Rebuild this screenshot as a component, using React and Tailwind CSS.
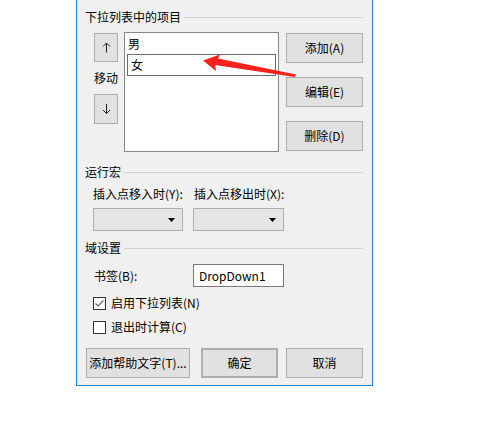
import React from "react";

const font = { fontFamily: '"Noto Sans CJK SC", "Noto Sans", sans-serif' };

function Header({ children }) {
  return (
    <div className="flex items-center h-[16px] leading-[16px]">
      <span className="whitespace-nowrap">{children}</span>
      <div className="flex-1 h-px bg-[#d2d2d2] ml-[3px] mr-[1px]" />
    </div>
  );
}

function Btn({ children, className = "" }) {
  return (
    <div
      className={
        "h-[30px] flex items-center justify-center bg-[#e1e1e1] border border-[#adadad] leading-[16px] whitespace-nowrap " +
        className
      }
    >
      {children}
    </div>
  );
}

function Combo({ w }) {
  return (
    <div
      className={
        "h-[23px] bg-[#e5e5e5] border border-[#acacac] flex items-center justify-end pr-[7px] " + w
      }
    >
      <svg width="7" height="4" viewBox="0 0 7 4">
        <path d="M0 0 H7 L3.5 4 Z" fill="#000" />
      </svg>
    </div>
  );
}

function Check({ checked }) {
  return (
    <div className="w-[13px] h-[13px] border border-[#333] bg-white flex items-center justify-center">
      {checked && (
        <svg width="11" height="11" viewBox="0 0 11 11">
          <path d="M1.5 5.5 L4 8 L9.5 2.5" stroke="#6a6a6a" strokeWidth="1.2" fill="none" />
        </svg>
      )}
    </div>
  );
}

function Arrow({ up }) {
  return (
    <svg width="9" height="11" viewBox="0 0 9 11">
      {up ? (
        <path d="M4.5 1 V10.5 M1 4.5 L4.5 1 L8 4.5" stroke="#222" strokeWidth="1" fill="none" />
      ) : (
        <path d="M4.5 0 V9.5 M1 6 L4.5 9.5 L8 6" stroke="#222" strokeWidth="1" fill="none" />
      )}
    </svg>
  );
}

export default function App() {
  return (
    <div className="w-[502px] h-[421px] bg-white relative text-[12px] text-black" style={font}>
      <div className="ml-[76px] w-[297px] h-[386px] bg-[#f0f0f0] border-x border-b border-[#1883d7] px-[8px] pt-[9px]">
        <Header>下拉列表中的项目</Header>

        <div className="flex mt-[7px] h-[120px]">
          <div className="ml-[8px] w-[26px] flex flex-col items-center">
            <div className="mt-[1px] w-[24px] h-[29px] bg-[#e1e1e1] border border-[#adadad] flex items-center justify-center">
              <Arrow up />
            </div>
            <div className="mt-[8px] h-[16px] leading-[16px] whitespace-nowrap">移动</div>
            <div className="mt-[8px] w-[24px] h-[30px] bg-[#e1e1e1] border border-[#adadad] flex items-center justify-center">
              <Arrow />
            </div>
          </div>
          <div className="ml-[5px] w-[155px] h-[120px] border border-[#828790] bg-white px-[2px]">
            <div className="h-[21px] flex items-center pl-[1px] leading-[16px]">男</div>
            <div className="h-[22px] flex items-center pl-[3px] border border-[#6d6d6d] leading-[16px]">女</div>
          </div>
          <div className="ml-[7px] w-[77px] flex flex-col">
            <Btn className="mt-[1px]">添加(A)</Btn>
            <Btn className="mt-[14px]">编辑(E)</Btn>
            <Btn className="mt-[14px]">删除(D)</Btn>
          </div>
        </div>

        <div className="mt-[12px]">
          <Header>运行宏</Header>
        </div>

        <div className="flex mt-[6px] h-[16px] leading-[16px] whitespace-nowrap">
          <span className="ml-[8px] w-[101px]">插入点移入时(Y):</span>
          <span>插入点移出时(X):</span>
        </div>

        <div className="flex mt-[6px]">
          <Combo w="ml-[8px] w-[90px]" />
          <Combo w="ml-[10px] w-[91px]" />
        </div>

        <div className="mt-[9px]">
          <Header>域设置</Header>
        </div>

        <div className="flex items-center mt-[8px] h-[23px]">
          <span className="ml-[9px] w-[99px] leading-[16px]">书签(B):</span>
          <div className="w-[91px] h-[23px] bg-white border border-[#7a7a7a] flex items-center pl-[5px] leading-[16px]">
            DropDown1
          </div>
        </div>

        <div className="flex items-center mt-[8px] h-[16px] ml-[8px]">
          <Check checked />
          <span className="ml-[5px] leading-[16px]">启用下拉列表(N)</span>
        </div>
        <div className="flex items-center mt-[8px] h-[16px] ml-[8px]">
          <Check />
          <span className="ml-[5px] leading-[16px]">退出时计算(C)</span>
        </div>

        <div className="flex mt-[13px] ml-[1px]">
          <Btn className="w-[104px]">添加帮助文字(T)...</Btn>
          <Btn className="ml-[11px] w-[77px] border-2 border-[#0078d7]">确定</Btn>
          <Btn className="ml-[8px] w-[77px]">取消</Btn>
        </div>
      </div>

      <svg className="absolute left-0 top-0 pointer-events-none" width="502" height="421" viewBox="0 0 502 421">
        <polygon
          points="203,60.5 220,54.5 218,58.5 296,74.5 295,77 215,65 216,71"
          fill="#f5221b"
        />
      </svg>
    </div>
  );
}
